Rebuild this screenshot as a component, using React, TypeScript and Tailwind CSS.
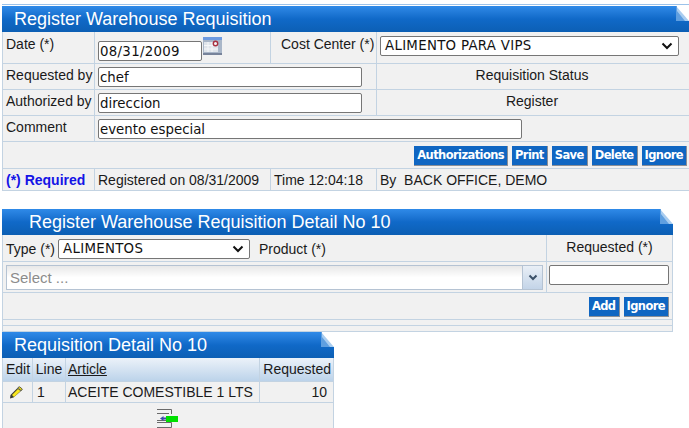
const sans = "font-['Liberation_Sans',Arial,sans-serif]";
const verdana = "font-['DejaVu_Sans',Verdana,sans-serif]";

function Header({ title, pad, width }: { title: string; pad: string; width: string }) {
  return (
    <div className={`relative h-[26px] ${width} bg-gradient-to-b from-[#2f8ae8] via-[#1069c8] to-[#0c5fb4] text-white text-[18px] leading-[27px] ${pad} overflow-hidden`}>
      {title}
      <div className="absolute right-0 top-0 w-[13px] h-[15px] bg-white" />
      <svg className="absolute right-0 top-0" width="13" height="15" viewBox="0 0 13 15">
        <path d="M0 0L13 15H0Z" fill="#a9cdf0" />
        <path d="M0 0H1V5L9 15H0Z" fill="#5f9fe0" />
      </svg>
    </div>
  );
}

function Btn({ children }: { children: string }) {
  return (
    <span className={`${verdana} inline-block h-[20px] px-[3px] bg-[#0f66c2] text-white font-bold text-[11.5px] leading-[19px] border-r border-b border-[#8a8f96] tracking-[-0.6px]`}>
      {children}
    </span>
  );
}

function Field({ w, value, spaced }: { w: string; value: string; spaced?: boolean }) {
  return (
    <div className={`${verdana} ${w} h-[20px] bg-white border border-[#767676] rounded-[2px] px-[1px] text-[13.33px] leading-[20px] text-[#111] ${spaced ? "tracking-[0.3px]" : ""}`}>
      {value}
    </div>
  );
}

function Chevron() {
  return (
    <svg width="12" height="8" viewBox="0 0 12 8" className="shrink-0">
      <path d="M1.5 1.5L6 6L10.5 1.5" fill="none" stroke="#111" strokeWidth="2" />
    </svg>
  );
}

function Select({ w, value }: { w: string; value: string }) {
  return (
    <div className={`${verdana} ${w} h-[20px] bg-white border border-[#767676] rounded-[2px] pl-[4px] pr-[5px] flex items-center justify-between text-[13.33px] tracking-[0.3px] text-[#111]`}>
      <span>{value}</span>
      <Chevron />
    </div>
  );
}

const rowB = "flex border-b border-[#c3d3e2]";
const cellB = "border-r border-[#c3d3e2]";

function DateIcon() {
  return (
    <svg width="19" height="18" viewBox="0 0 19 18" className="self-start mt-[-4px] ml-[1px]">
      <rect x="0" y="0" width="19" height="18" fill="#a9b6c8" />
      <rect x="0" y="0" width="19" height="3" fill="#6f9be0" />
      <rect x="1" y="5" width="14" height="10" fill="#dfe4ea" />
      <path d="M1 8.5H15M1 12H15M5 5V15M9 5V15" stroke="#f6f7f9" />
      <circle cx="12.5" cy="6.5" r="2.2" fill="#f4f4f4" stroke="#a83040" strokeWidth="1.4" />
      <rect x="0" y="16" width="19" height="2" fill="#77839a" />
    </svg>
  );
}

function MainPanel() {
  return (
    <div className="ml-[2px] mt-[4px] w-[687px] border-t border-[#9cc3ea]">
      <div className="h-[1px]" />
      <Header title="Register Warehouse Requisition" pad="pl-[12px]" width="w-full" />
      <div className="bg-[#f1f1f1] border-l border-[#c3d3e2]">
        <div className={`${rowB} h-[32px]`}>
          <div className={`${cellB} w-[92px] pl-[3px] pt-[2px]`}>Date (*)</div>
          <div className={`${cellB} w-[176px] pl-[3px] pt-[9px] flex`}>
            <Field w="w-[104px]" value="08/31/2009" spaced />
            <DateIcon />
          </div>
          <div className={`${cellB} w-[106px] pl-[10px] pt-[2px] whitespace-nowrap`}>Cost Center (*)</div>
          <div className="pl-[3px] pt-[4px]">
            <Select w="w-[299px]" value="ALIMENTO PARA VIPS" />
          </div>
        </div>
        <div className={`${rowB} h-[26px]`}>
          <div className={`${cellB} w-[92px] pl-[3px] pt-[1px] whitespace-nowrap`}>Requested by</div>
          <div className={`${cellB} w-[282px] pl-[3px] pt-[3px]`}>
            <Field w="w-[264px]" value="chef" />
          </div>
          <div className="w-[310px] text-center pt-[1px]">Requisition Status</div>
        </div>
        <div className={`${rowB} h-[26px]`}>
          <div className={`${cellB} w-[92px] pl-[3px] pt-[1px] whitespace-nowrap`}>Authorized by</div>
          <div className={`${cellB} w-[282px] pl-[3px] pt-[3px]`}>
            <Field w="w-[264px]" value="direccion" />
          </div>
          <div className="w-[310px] text-center pt-[1px]">Register</div>
        </div>
        <div className={`${rowB} h-[26px]`}>
          <div className={`${cellB} w-[92px] pl-[3px] pt-[1px]`}>Comment</div>
          <div className="pl-[3px] pt-[3px]">
            <Field w="w-[424px]" value="evento especial" />
          </div>
        </div>
        <div className={`${rowB} h-[27px] justify-end items-start pt-[4px] pr-[2px] gap-[4px]`}>
          <Btn>Authorizations</Btn>
          <Btn>Print</Btn>
          <Btn>Save</Btn>
          <Btn>Delete</Btn>
          <Btn>Ignore</Btn>
        </div>
        <div className={`${rowB} h-[22px] leading-[22px]`}>
          <div className={`${cellB} w-[92px] pl-[3px] font-bold text-[#1414e6] whitespace-nowrap`}>(*) Required</div>
          <div className={`${cellB} w-[176px] pl-[3px]`}>Registered on 08/31/2009</div>
          <div className={`${cellB} w-[106px] pl-[3px]`}>Time 12:04:18</div>
          <div className="pl-[3px] whitespace-pre">By  BACK OFFICE, DEMO</div>
        </div>
      </div>
    </div>
  );
}

function DetailPanel() {
  return (
    <div className="ml-[2px] mt-[18px] w-[671px]">
      <Header title="Register Warehouse Requisition Detail No 10" pad="pl-[27px]" width="w-full" />
      <div className="bg-[#f1f1f1] border-x border-[#c3d3e2]">
        <div className={`${rowB} h-[27px]`}>
          <div className={`${cellB} w-[544px] pl-[3px] pt-[4px] flex items-start`}>
            <span>Type (*)</span>
            <div className="ml-[3px]"><Select w="w-[192px]" value="ALIMENTOS" /></div>
            <span className="ml-[9px]">Product (*)</span>
          </div>
          <div className="flex-1 text-center pt-[2px]">Requested (*)</div>
        </div>
        <div className={`${rowB} h-[31px]`}>
          <div className={`${cellB} w-[544px] pl-[3px] pt-[3px]`}>
            <div className="w-[537px] h-[25px] flex border border-[#b5c3d3] border-r-0 bg-gradient-to-b from-[#e8e8e8] via-white to-white">
              <span className="flex-1 pl-[3px] text-[#8c8c8c] text-[15px] leading-[23px]">Select ...</span>
              <div className="w-[21px] h-[23px] bg-gradient-to-b from-[#e9eff6] to-[#c3d4e8] border-l border-r border-[#b5c3d3] flex items-center justify-center">
                <svg width="10" height="7" viewBox="0 0 10 7">
                  <path d="M1.5 1.5L5 5L8.5 1.5" fill="none" stroke="#3b5068" strokeWidth="2" />
                </svg>
              </div>
            </div>
          </div>
          <div className="pl-[2px] pt-[3px]">
            <Field w="w-[120px]" value="" />
          </div>
        </div>
        <div className={`${rowB} h-[27px] justify-end items-start pt-[4px] pr-[3px] gap-[4px]`}>
          <Btn>Add</Btn>
          <Btn>Ignore</Btn>
        </div>
        <div className={`${rowB} h-[6px]`} />
        <div className={`${rowB} h-[6px]`} />
      </div>
    </div>
  );
}

function Pencil() {
  return (
    <svg width="14" height="13" viewBox="0 0 14 13">
      <path d="M4.5 11.5L1 12.5L1.5 9L8.5 2L12 5Z" fill="#3a3a30" />
      <path d="M3 9L9 3L11.5 5L5 11Z" fill="#f7e61e" />
      <path d="M9 1.5L10.5 0.8L13.3 3L12.5 4.5L11 4Z" fill="#f7e61e" stroke="#3a3a30" strokeWidth="0.8" />
    </svg>
  );
}

function ExitIcon() {
  return (
    <svg width="21" height="19" viewBox="0 0 21 19">
      <path d="M0 0.5H14.5V5M0 4.5H12M0 11.5H9M0 13.5H14.5V18.5H0" fill="none" stroke="#6a6a6a" />
      <path d="M3 9.5L6.5 7V12Z" fill="#3e4fa8" />
      <rect x="6" y="8.5" width="3" height="2" fill="#3e4fa8" />
      <rect x="9" y="7" width="12" height="6" fill="#00e000" />
    </svg>
  );
}

function ListPanel() {
  const th = "bg-gradient-to-b from-[#ecf2f9] to-[#bcd3ea]";
  return (
    <div className="ml-[2px] w-[332px]">
      <Header title="Requisition Detail No 10" pad="pl-[12px]" width="w-full" />
      <div className="bg-[#f1f1f1] border-l border-r border-[#c3d3e2]">
        <div className={`${rowB} h-[24px] leading-[23px] ${th}`}>
          <div className={`${cellB} w-[30px] pl-[3px]`}>Edit</div>
          <div className={`${cellB} w-[33px] text-center`}>Line</div>
          <div className={`${cellB} w-[194px] pl-[2px] underline`}>Article</div>
          <div className="flex-1 text-right pr-[2px]">Requested</div>
        </div>
        <div className={`${rowB} h-[21px] leading-[21px] items-stretch`}>
          <div className={`${cellB} w-[30px] pl-[6px] pt-[4px]`}><Pencil /></div>
          <div className={`${cellB} w-[33px] pl-[4px]`}>1</div>
          <div className={`${cellB} w-[194px] pl-[2px] whitespace-nowrap`}>ACEITE COMESTIBLE 1 LTS</div>
          <div className="flex-1 text-right pr-[6px]">10</div>
        </div>
        <div className="h-[26px] flex justify-center pt-[6px] pr-[2px]"><ExitIcon /></div>
      </div>
    </div>
  );
}

export default function App() {
  return (
    <div className={`${sans} w-[689px] h-[428px] overflow-hidden bg-white text-[14px] leading-[20px] text-[#1a1a1a]`}>
      <MainPanel />
      <DetailPanel />
      <ListPanel />
    </div>
  );
}
